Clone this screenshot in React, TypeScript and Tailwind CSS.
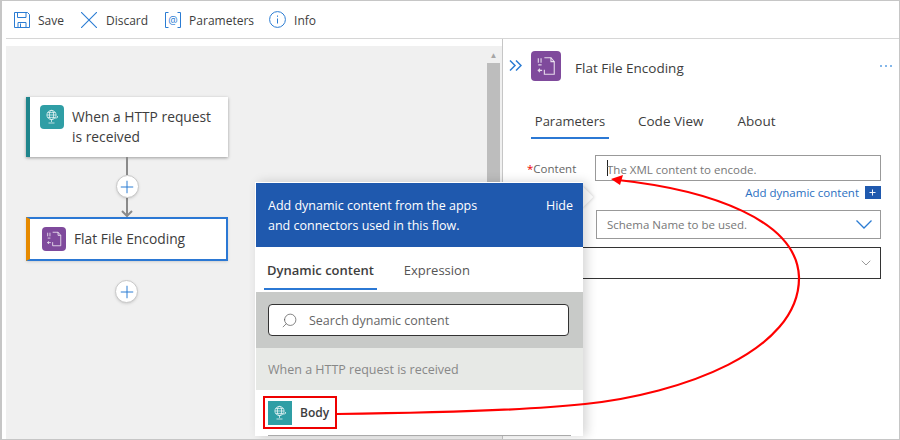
import { Plus, Search, ChevronDown } from "lucide-react";

function HttpIcon() {
  return (
    <svg width="14" height="16" viewBox="0 0 14 16" fill="none" stroke="white" strokeWidth="0.8" strokeOpacity="0.85">
      <circle cx="6.5" cy="6" r="4.6" />
      <ellipse cx="6.5" cy="6" rx="2.1" ry="4.6" />
      <path d="M1.9 6h9.2M2.6 3.6h7.8M2.6 8.400h7.800" />
      <path d="M6.500 10.600v2.400M3.500 14h6" />
      <path d="M10.500 9.500l2.500-1.500-1-1" />
    </svg>
  );
}

function FlatFileIcon({ size }: { size: number }) {
  return (
    <svg width={size} height={size} viewBox="0 0 20 20" fill="none" stroke="white" strokeWidth="1" strokeOpacity="0.8">
      <path d="M8.500 2.500h6l3 3.500v11.500h-9v-4" />
      <path d="M14.500 2.500v3.500h3" />
      <path d="M3 3v4M5.500 3v4M3 9h3M2.500 14h4M4.500 12.500l-1.500 1.500 1.500 1.500" />
    </svg>
  );
}

function AddStep() {
  return (
    <div className="relative z-10 flex h-[23px] w-[23px] items-center justify-center rounded-full border border-[#c8c8c8] bg-white shadow-sm">
      <Plus size={20} strokeWidth={1.2} className="text-[#2b7cd3]" />
    </div>
  );
}

export default function App() {
  return (
    <div className="relative flex h-[440px] w-[900px] flex-col overflow-hidden border-t border-r border-b border-l-2 border-[#c6c6c6] bg-white font-['Open_Sans',sans-serif] text-[12px] text-[#3d3d3d]">
      {/* command bar */}
      <div className="ml-1 flex h-[38px] shrink-0 items-center border-b border-[#d6d6d6] pl-2">
        <div className="flex items-center gap-2">
          <svg width="16" height="16" viewBox="0 0 16 16" fill="none" stroke="#2b7cd3" strokeWidth="1">
            <path d="M.5.500h13l2 2v13H.500z" />
            <path d="M3.500.500v5h8.500v-5M4 15.500v-5h8v5M6.500 11.500v4" />
          </svg>
          <span className="pt-0.5">Save</span>
        </div>
        <div className="ml-[17px] flex items-center gap-[9px]">
          <svg width="16" height="16" viewBox="0 0 16 16" stroke="#2b7cd3" strokeWidth="1.100">
            <path d="M0 0l16 16M16 0L0 16" />
          </svg>
          <span className="pt-0.5">Discard</span>
        </div>
        <div className="ml-[17px] flex items-center gap-2">
          <svg width="16" height="16" viewBox="0 0 16 16" fill="none" stroke="#2b7cd3" strokeWidth="1">
            <path d="M3.500.500H.500v15h3M12.500.500h3v15h-3" />
            <text x="8" y="11.500" textAnchor="middle" fontSize="10.500" fill="#2b7cd3" stroke="none">@</text>
          </svg>
          <span className="pt-0.5">Parameters</span>
        </div>
        <div className="ml-[15px] flex items-center gap-2">
          <svg width="17" height="17" viewBox="0 0 17 17" fill="none" stroke="#2b7cd3" strokeWidth="1">
            <circle cx="8.500" cy="8.500" r="7.900" />
            <path d="M8.500 7.500v5M8.500 4.500v1.300" />
          </svg>
          <span className="pt-0.5">Info</span>
        </div>
      </div>

      <div className="flex min-h-0 flex-1 pt-[7px]">
        {/* designer canvas */}
        <div className="ml-1 flex w-[481px] shrink-0 flex-col items-start bg-[#f0f0f0] pl-5 pt-[51px]">
          <div className="flex h-[60px] w-[202px] border-l-4 border-[#1f858c] bg-white pl-[10px] pt-2 shadow-[0_1px_3px_rgba(0,0,0,0.35)]">
            <div className="flex h-6 w-6 shrink-0 items-center justify-center rounded-sm bg-[#2f9ea5]">
              <HttpIcon />
            </div>
            <div className="ml-2 pt-0.5 text-[13.8px] font-medium leading-5">
              When a HTTP request
              <br />
              is received
            </div>
          </div>

          <div className="flex w-[202px] flex-col items-center">
            <div className="h-[18px] w-0.5 bg-[#8a8a8a]" />
            <AddStep />
            <div className="h-[17px] w-0.5 bg-[#8a8a8a]" />
            <svg width="12" height="7" viewBox="0 0 12 7" fill="none" stroke="#8a8a8a" strokeWidth="2" className="-mt-[5px]">
              <path d="M1 1l5 5 5-5" />
            </svg>
          </div>

          <div className="flex h-[44px] w-[202px] items-center border-2 border-l-4 border-[#2b78d4] border-l-[#e68a00] bg-white pl-3 shadow-sm">
            <div className="flex h-6 w-6 shrink-0 items-center justify-center rounded-sm bg-[#7f4a9c]">
              <FlatFileIcon size={18} />
            </div>
            <span className="ml-2 text-[13.8px] font-medium">Flat File Encoding</span>
          </div>

          <div className="ml-[89px] mt-[19px]">
            <AddStep />
          </div>
        </div>

        {/* scrollbar */}
        <div className="flex w-[15px] shrink-0 flex-col bg-[#f0f0f0] pr-0.5">
          <div className="flex h-[17px] items-center justify-center text-[8px] text-[#a6a6a6]">▲</div>
          <div className="h-[340px] bg-[#bdbdbd]" />
        </div>

        {/* action panel */}
        <div className="-mt-[7px] flex-1 border-l border-[#c6c6c6] pl-[7px] pr-[18px] pt-[12px]">
          <div className="flex items-center">
            <svg width="13" height="11" viewBox="0 0 13 11" fill="none" stroke="#2b7cd3" strokeWidth="1.500" className="-ml-px -mt-px">
              <path d="M1 .500l5 5-5 5M7 .500l5 5-5 5" />
            </svg>
            <div className="ml-[9px] flex h-[30px] w-[30px] items-center justify-center rounded-sm bg-[#7f4a9c]">
              <FlatFileIcon size={22} />
            </div>
            <span className="ml-[14px] pt-1 text-[13.5px]">Flat File Encoding</span>
            <svg width="12" height="2" viewBox="0 0 12 2" fill="#5b9fe3" className="-mr-[11px] ml-auto">
              <circle cx="1" cy="1" r="1" />
              <circle cx="6" cy="1" r="1" />
              <circle cx="11" cy="1" r="1" />
            </svg>
          </div>

          <div className="ml-[21px] mt-[29px] flex h-[28px] items-start text-[13px]">
            <span className="w-[78px] border-b-2 border-[#2b78d4] pb-[5px] pt-0.5 text-center">Parameters</span>
            <span className="ml-[29px] pt-px text-[13.5px]">Code View</span>
            <span className="ml-[34px] pt-px text-[13.5px]">About</span>
          </div>

          <div className="mt-[17px] flex items-start">
            <span className="ml-[17px] mt-[5px] w-[68px] text-[11.5px] text-[#666]">
              <span className="text-[#e00]">*</span>Content
            </span>
            <div className="flex h-[26px] flex-1 items-center border border-[#999] pl-[11px] text-[11.5px]">
              <span className="-mr-px h-4 w-px bg-[#222]" />
              <span className="pt-[3px] text-[#777]">The XML content to encode.</span>
            </div>
          </div>
          <div className="mt-[3px] flex items-center justify-end gap-[6px] text-[11.5px] text-[#2a6fc1]">
            <span>Add dynamic content</span>
            <span className="flex h-[13px] w-4 items-center justify-center border-r-2 border-[#1f59ae] bg-[#1f59ae] text-white">
              <Plus size={9} strokeWidth={2.5} />
            </span>
          </div>
          <div className="ml-[86px] mt-[9px] flex h-[29px] items-center justify-between border border-[#999] pl-[10px] pr-2 text-[11.5px] text-[#777]">
            <span>Schema Name to be used.</span>
            <svg width="16" height="9" viewBox="0 0 16 9" fill="none" stroke="#2b7cd3" strokeWidth="1.300">
              <path d="M.500.500L8 8l7.500-7.500" />
            </svg>
          </div>
          <div className="ml-[60px] mt-2 flex h-[32px] items-center justify-end border border-[#333] pr-[6px]">
            <ChevronDown size={16} strokeWidth={1} className="text-[#666]" />
          </div>
        </div>
      </div>

      {/* dynamic content flyout */}
      <div className="absolute left-[580px] top-[188px] h-[16px] w-[16px] -translate-x-1/2 rotate-45 bg-white shadow-[1px_-1px_3px_rgba(0,0,0,0.12)]" />
      <div className="absolute left-[253px] top-[181px] w-[328px] border-t border-l border-white bg-white shadow-[4px_0_10px_rgba(0,0,0,0.16)]">
        <div className="flex h-[64px] items-start justify-between bg-[#1f59ae] pl-3 pr-[10px] pt-[13px] text-[12.5px] leading-5 text-white">
          <div>
            Add dynamic content from the apps
            <br />
            and connectors used in this flow.
          </div>
          <span>Hide</span>
        </div>
        <div className="flex h-[45px] items-start pl-2 pt-[14px] text-[13px]">
          <span className="border-b-2 border-[#2b78d4] px-[3px] pb-[7px] font-semibold">Dynamic content</span>
          <span className="ml-[27px] text-[#555]">Expression</span>
        </div>
        <div className="bg-[#c8cac8] py-3 pl-3 pr-[14px]">
          <div className="flex h-[32px] items-center rounded-sm border border-[#333] bg-white pl-3">
            <Search size={17} strokeWidth={1} className="-scale-x-100 text-[#555]" />
            <span className="ml-[11px] pt-0.5 text-[12.5px] text-[#666]">Search dynamic content</span>
          </div>
        </div>
        <div className="flex h-[42px] items-center bg-[#e7e9e6] pl-3 pt-0.5 text-[12.5px] text-[#888]">When a HTTP request is received</div>
        <div className="pl-[7px] pt-[6px]">
          <div className="flex h-[33px] w-[74px] items-center border-2 border-[#ee0000] pl-[3px]">
            <div className="flex h-6 w-6 items-center justify-center bg-[#2f9ea5]">
              <HttpIcon />
            </div>
            <span className="ml-2 font-semibold">Body</span>
          </div>
        </div>
        <div className="ml-3 mr-3 mt-[6px] h-px bg-[#aaa]" />
      </div>

      {/* callout arrow */}
      <svg className="pointer-events-none absolute -left-0.5 -top-px" width="900" height="440" fill="none">
        <path d="M337 414C430 413 520 411 585 404C680 394 800 352 799 277C797 220 710 190 618 180" stroke="#ff0000" strokeWidth="2.200" />
        <path d="M611 179L623 175L620 185Z" fill="#ff0000" />
      </svg>
    </div>
  );
}
